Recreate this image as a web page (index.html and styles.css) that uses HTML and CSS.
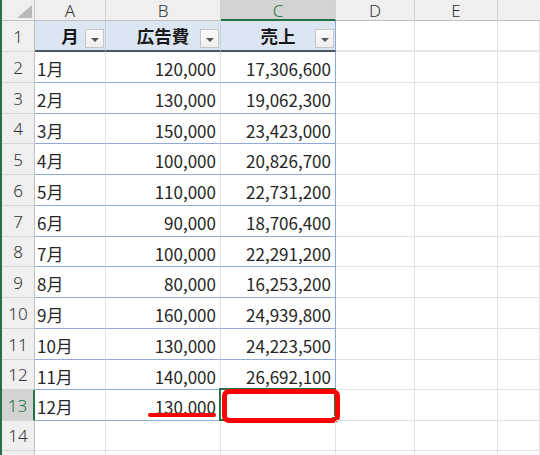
FILE: index.html
```html
<!DOCTYPE html>
<html lang="ja">
<head>
<meta charset="utf-8">
<title>Sheet</title>
<link rel="stylesheet" href="styles.css">
</head>
<body>
<div class="frame">
<div class="sheet">
  <div class="c corner"><svg class="tri" width="16" height="14" viewBox="0 0 16 14"><polygon points="0,13 15,13 15,0" fill="#b9b9b9"/></svg></div>
  <div class="c ch">A</div>
  <div class="c ch">B</div>
  <div class="c ch sel">C</div>
  <div class="c ch">D</div>
  <div class="c ch">E</div>
  <div class="c ch last"></div>

  <div class="c rh">1</div>
  <div class="c th">月<span class="fb"><span class="arr"></span></span></div>
  <div class="c th">広告費<span class="fb"><span class="arr"></span></span></div>
  <div class="c th tr">売上<span class="fb"><span class="arr"></span></span></div>
  <div class="c g hb"></div><div class="c g hb"></div><div class="c g hb"></div>

  <div class="c rh">2</div><div class="c td">1月</div><div class="c td n">120,000</div><div class="c td n tr">17,306,600</div><div class="c g"></div><div class="c g"></div><div class="c g"></div>
  <div class="c rh">3</div><div class="c td">2月</div><div class="c td n">130,000</div><div class="c td n tr">19,062,300</div><div class="c g"></div><div class="c g"></div><div class="c g"></div>
  <div class="c rh">4</div><div class="c td">3月</div><div class="c td n">150,000</div><div class="c td n tr">23,423,000</div><div class="c g"></div><div class="c g"></div><div class="c g"></div>
  <div class="c rh">5</div><div class="c td">4月</div><div class="c td n">100,000</div><div class="c td n tr">20,826,700</div><div class="c g"></div><div class="c g"></div><div class="c g"></div>
  <div class="c rh">6</div><div class="c td">5月</div><div class="c td n">110,000</div><div class="c td n tr">22,731,200</div><div class="c g"></div><div class="c g"></div><div class="c g"></div>
  <div class="c rh">7</div><div class="c td">6月</div><div class="c td n">90,000</div><div class="c td n tr">18,706,400</div><div class="c g"></div><div class="c g"></div><div class="c g"></div>
  <div class="c rh">8</div><div class="c td">7月</div><div class="c td n">100,000</div><div class="c td n tr">22,291,200</div><div class="c g"></div><div class="c g"></div><div class="c g"></div>
  <div class="c rh">9</div><div class="c td">8月</div><div class="c td n">80,000</div><div class="c td n tr">16,253,200</div><div class="c g"></div><div class="c g"></div><div class="c g"></div>
  <div class="c rh">10</div><div class="c td">9月</div><div class="c td n">160,000</div><div class="c td n tr">24,939,800</div><div class="c g"></div><div class="c g"></div><div class="c g"></div>
  <div class="c rh">11</div><div class="c td">10月</div><div class="c td n">130,000</div><div class="c td n tr">24,223,500</div><div class="c g"></div><div class="c g"></div><div class="c g"></div>
  <div class="c rh">12</div><div class="c td">11月</div><div class="c td n">140,000</div><div class="c td n tr">26,692,100</div><div class="c g"></div><div class="c g"></div><div class="c g"></div>
  <div class="c rh rsel">13</div><div class="c td">12月</div><div class="c td n mark">130,000<span class="uline"></span></div><div class="c td tr active"><span class="selbox"><span class="handle"></span></span><span class="redbox"></span></div><div class="c g"></div><div class="c g"></div><div class="c g"></div>
  <div class="c rh">14</div><div class="c g"></div><div class="c g"></div><div class="c g"></div><div class="c g"></div><div class="c g"></div><div class="c g"></div>
  <div class="c rh"></div><div class="c g"></div><div class="c g"></div><div class="c g"></div><div class="c g"></div><div class="c g"></div><div class="c g"></div>
</div>
</div>
</body>
</html>
```
FILE: styles.css
```css
html, body {
  margin: 0;
  padding: 0;
  background: #ffffff;
  overflow: hidden;
}
.frame {
  width: 540px;
  height: 455px;
  border-left: 2px solid #217346;
  box-sizing: border-box;
  overflow: hidden;
}
.sheet {
  display: grid;
  grid-template-columns: 33px 71px 115px 115px 79px 83px 1fr;
  grid-template-rows: 21px 31px 31px 31px 30px 31px 31px 31px 30px 31px 31px 31px 30px 31px 30px 30px;
  font-family: "Noto Sans CJK JP", "Noto Sans", sans-serif;
  font-size: 17px;
  color: #262626;
}
.c {
  box-sizing: border-box;
  border-right: 1px solid #e1e1e1;
  border-bottom: 1px solid #e1e1e1;
  position: relative;
  display: flex;
  align-items: center;
  white-space: nowrap;
  line-height: 1;
}
.corner {
  background: #efefef;
  border-right: 1px solid #c8c8c8;
  border-bottom: 1px solid #c0c0c0;
}
.tri {
  position: absolute;
  left: 15px;
  top: 5px;
}
.ch {
  background: #efefef;
  border-right: 1px solid #d2d2d2;
  border-bottom: 1px solid #c0c0c0;
  justify-content: center;
  color: #333333;
  font-size: 17px;
  font-family: "Noto Sans", "Noto Sans CJK JP", sans-serif;
  font-weight: 300;
  padding-top: 1px;
}
.ch.sel {
  background: #d3d3d3;
  color: #217346;
  border-bottom: 2px solid #217346;
  padding-top: 2px;
}
.ch.last {
  border-right: none;
}
.rh {
  background: #efefef;
  border-right: 1px solid #c0c0c0;
  border-bottom: 1px solid #d6d6d6;
  justify-content: center;
  color: #333333;
  font-family: "Noto Sans", "Noto Sans CJK JP", sans-serif;
  font-weight: 300;
  font-size: 17px;
}
.rh.rsel {
  background: #d3d3d3;
  color: #217346;
  border-right: 2px solid #217346;
}
.th {
  background: #dce6f2;
  border-right: 1px solid #c5d0de;
  border-bottom: 2px solid #4a5566;
  justify-content: center;
  font-weight: 700;
  font-size: 17.5px;
  color: #1a1a1a;
}
.th.tr {
  border-right: 1px solid #8eaadb;
}
.hb {
  border-bottom: 2px solid #e6e6e6;
}
.td {
  border-bottom: 1px solid #8eaadb;
  padding-left: 2px;
  padding-top: 3px;
}
.td.n {
  justify-content: flex-end;
  padding-left: 0;
  padding-right: 4px;
}
.td.tr {
  border-right: 1px solid #8eaadb;
}
.fb {
  position: absolute;
  right: 1px;
  top: 8px;
  width: 19px;
  height: 19px;
  box-sizing: border-box;
  background: linear-gradient(#fbfbfb, #eeeeee);
  border: 1px solid #c6c6c6;
  display: flex;
  align-items: center;
  justify-content: center;
}
.arr {
  width: 0;
  height: 0;
  border-left: 4px solid transparent;
  border-right: 4px solid transparent;
  border-top: 4px solid #555555;
  margin-top: 2px;
}
.selbox {
  position: absolute;
  left: -2px;
  top: -2px;
  right: -1px;
  bottom: -1px;
  border: 2px solid #217346;
}
.handle {
  position: absolute;
  right: -4px;
  bottom: -4px;
  width: 5px;
  height: 5px;
  background: #217346;
  border: 1px solid #ffffff;
}
.redbox {
  position: absolute;
  left: 1px;
  top: -1px;
  width: 118px;
  height: 34px;
  box-sizing: border-box;
  border: 5px solid #ff0000;
  border-radius: 7px;
}
.uline {
  position: absolute;
  left: 42px;
  top: 23px;
  width: 68px;
  height: 4px;
  border-radius: 2px;
  background: #ff0000;
}
```
